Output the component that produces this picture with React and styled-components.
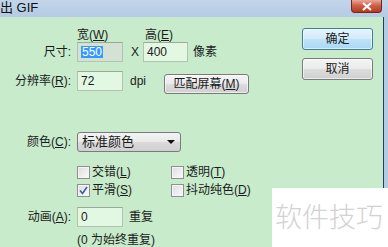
import React from "react";
import styled, { createGlobalStyle } from "styled-components";

const GlobalStyle = createGlobalStyle`
  html, body {
    margin: 0;
    padding: 0;
    background: #fff;
  }
  body {
    font-family: "Liberation Sans", "Noto Sans CJK SC", sans-serif;
    font-size: 12px;
    color: #1b1b1b;
  }
`;

const Window = styled.div`
  position: relative;
  width: 388px;
  height: 247px;
  overflow: hidden;
  display: flex;
  flex-direction: column;
  background: #b3cbe3;
`;

const TitleBar = styled.div`
  height: 17px;
  flex: none;
  display: flex;
  align-items: flex-start;
  justify-content: space-between;
  background: linear-gradient(#c2d5ea, #b5cbe4);
`;

const Title = styled.div`
  font-size: 13px;
  line-height: 15px;
  color: #101010;
  white-space: nowrap;
`;

const CloseButton = styled.div`
  width: 31px;
  height: 13px;
  margin-right: 6px;
  box-sizing: border-box;
  border: 1px solid #6b2a1e;
  border-top: none;
  border-radius: 0 0 4px 4px;
  background: linear-gradient(#eaa896, #cf604a 45%, #b8381f);
  display: flex;
  align-items: center;
  justify-content: center;
`;

const Frame = styled.div`
  flex: 1;
  display: flex;
`;

const Body = styled.div`
  flex: 1;
  display: flex;
  background: #c7ebcb;
  border-right: 1px solid #22405e;
  margin-right: 4px;
`;

const Form = styled.div`
  width: 302px;
  flex: none;
  padding-top: 11px;
  display: flex;
  flex-direction: column;
`;

const Row = styled.div`
  display: flex;
  align-items: ${(p) => p.$align || "center"};
  height: ${(p) => p.$h}px;
  margin-top: ${(p) => p.$mt || 0}px;
  white-space: nowrap;
`;

const Label = styled.div`
  width: 71px;
  margin-right: 6px;
  margin-top: ${(p) => p.$mt || 0}px;
  text-align: right;
  line-height: 14px;
  flex: none;
`;

const Text = styled.span`
  line-height: 14px;
  margin-left: ${(p) => p.$ml || 0}px;
  margin-top: ${(p) => p.$mt || 0}px;
  width: ${(p) => (p.$w ? `${p.$w}px` : "auto")};
  display: inline-block;
  flex: none;
`;

const Field = styled.div`
  width: ${(p) => p.$w || 46}px;
  height: 20px;
  box-sizing: border-box;
  border: 1px solid #b3c3b3;
  border-top-color: #99aa99;
  background: ${(p) => (p.$dim ? "#d3e2d2" : "#e3f8e3")};
  padding-left: 3px;
  display: flex;
  align-items: center;
  line-height: 14px;
  flex: none;
`;

const Selected = styled.span`
  background: #3399ff;
  color: #fff;
  padding: 0 1px;
  line-height: 12px;
`;

const Button = styled.div`
  width: ${(p) => p.$w}px;
  height: ${(p) => p.$h}px;
  box-sizing: border-box;
  border: 1px solid ${(p) => (p.$primary ? "#3d7bad" : "#7a7a7a")};
  border-radius: 3px;
  background: ${(p) =>
    p.$primary
      ? "linear-gradient(#e6f4fc, #d2ebf9 48%, #bee3f6 52%, #a9d8f3)"
      : "linear-gradient(#f4f4f4, #ebebeb 48%, #dddddd 52%, #cfcfcf)"};
  box-shadow: inset 0 0 0 1px rgba(255, 255, 255, 0.6);
  display: flex;
  align-items: center;
  justify-content: center;
  line-height: 14px;
  flex: none;
  margin-left: ${(p) => p.$ml || 0}px;
  margin-top: ${(p) => p.$mt || 0}px;
`;

const Select = styled.div`
  width: 104px;
  height: 20px;
  box-sizing: border-box;
  border: 1px solid #7a7a7a;
  border-radius: 3px;
  background: linear-gradient(#f3f3f3, #e9e9e9 48%, #dadada 52%, #d0d0d0);
  display: flex;
  align-items: center;
  justify-content: space-between;
  padding: 0 5px 0 4px;
  font-size: 13px;
  line-height: 14px;
`;

const Arrow = styled.span`
  width: 0;
  height: 0;
  border-left: 4px solid transparent;
  border-right: 4px solid transparent;
  border-top: 4px solid #111;
`;

const CheckGrid = styled.div`
  margin-top: 13px;
  margin-left: 77px;
  display: grid;
  grid-template-columns: 94px auto;
  row-gap: 4px;
`;

const CheckItem = styled.div`
  display: flex;
  align-items: center;
  height: 14px;
  white-space: nowrap;
  line-height: 14px;
`;

const Box = styled.span`
  width: 13px;
  height: 13px;
  box-sizing: border-box;
  border: 1px solid #8e8f8f;
  background: linear-gradient(135deg, #dcdcdc, #fbfbfb);
  box-shadow: inset 0 0 0 1px #f4f4f4;
  margin-right: 2px;
  display: flex;
  align-items: center;
  justify-content: center;
  flex: none;
`;

const Side = styled.div`
  display: flex;
  flex-direction: column;
  padding-top: 11px;
  gap: 8px;
`;

const Watermark = styled.div`
  position: absolute;
  left: 272px;
  top: 188px;
  width: 116px;
  height: 59px;
  background: #fff;
  box-sizing: border-box;
  padding: 10px 0 0 3px;
  font-family: "Noto Sans CJK SC", sans-serif;
  font-weight: 300;
  font-size: 27px;
  line-height: 36px;
  color: #d2d2d2;
  white-space: nowrap;
`;

const Check = ({ checked, children }) => (
  <CheckItem>
    <Box>
      {checked && (
        <svg width="9" height="9" viewBox="0 0 9 9">
          <path d="M1 4.5 L3.5 7.5 L8 1" fill="none" stroke="#3a5fa8" strokeWidth="1.6" />
        </svg>
      )}
    </Box>
    {children}
  </CheckItem>
);

export default function App() {
  return (
    <>
      <GlobalStyle />
      <Window>
        <TitleBar>
          <Title>出 GIF</Title>
          <CloseButton>
            <svg width="12" height="9" viewBox="0 0 12 9">
              <path d="M2 1 L10 8 M10 1 L2 8" stroke="#fff" strokeWidth="2.2" />
            </svg>
          </CloseButton>
        </TitleBar>
        <Frame>
          <Body>
            <Form>
              <Row $h={14}>
                <Text $ml={77} $w={68}>
                  宽(<u>W</u>)
                </Text>
                <Text>
                  高(<u>E</u>)
                </Text>
              </Row>
              <Row $h={20}>
                <Label>尺寸:</Label>
                <Field $dim>
                  <Selected>550</Selected>
                </Field>
                <Text $ml={8} $w={12}>
                  X
                </Text>
                <Field $w={45}>400</Field>
                <Text $ml={5}>像素</Text>
              </Row>
              <Row $h={23} $mt={9} $align="flex-start">
                <Label $mt={3}>
                  分辨率(<u>R</u>):
                </Label>
                <Field>72</Field>
                <Text $ml={7} $mt={3}>
                  dpi
                </Text>
                <Button $w={85} $h={20} $ml={18} $mt={3}>
                  匹配屏幕(<u>M</u>)
                </Button>
              </Row>
              <Row $h={20} $mt={38}>
                <Label>
                  颜色(<u>C</u>):
                </Label>
                <Select>
                  标准颜色
                  <Arrow />
                </Select>
              </Row>
              <CheckGrid>
                <Check>
                  交错(<u>L</u>)
                </Check>
                <Check>
                  透明(<u>T</u>)
                </Check>
                <Check checked>
                  平滑(<u>S</u>)
                </Check>
                <Check>
                  抖动纯色(<u>D</u>)
                </Check>
              </CheckGrid>
              <Row $h={20} $mt={10}>
                <Label>
                  动画(<u>A</u>):
                </Label>
                <Field>0</Field>
                <Text $ml={6}>重复</Text>
              </Row>
              <Row $h={13} $mt={6}>
                <Text $ml={77}>(0 为始终重复)</Text>
              </Row>
            </Form>
            <Side>
              <Button $w={71} $h={22} $primary>
                确定
              </Button>
              <Button $w={71} $h={22}>
                取消
              </Button>
            </Side>
          </Body>
        </Frame>
        <Watermark>软件技巧</Watermark>
      </Window>
    </>
  );
}
